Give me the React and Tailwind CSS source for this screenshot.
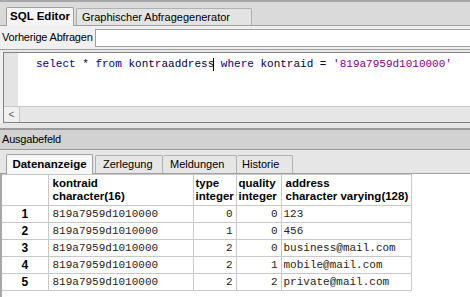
import React from "react";

const rows = [
  ["1", "819a7959d1010000", "0", "0", "123"],
  ["2", "819a7959d1010000", "1", "0", "456"],
  ["3", "819a7959d1010000", "2", "0", "business@mail.com"],
  ["4", "819a7959d1010000", "2", "1", "mobile@mail.com"],
  ["5", "819a7959d1010000", "2", "2", "private@mail.com"],
];

const ui = { fontFamily: '"Liberation Sans", Arial, sans-serif' };
const mono = { fontFamily: '"Liberation Mono", "Courier New", monospace' };

export default function App() {
  return (
    <div className="w-[470px] h-[297px] overflow-hidden flex flex-col bg-[#f0f0f0] text-[11px] text-black" style={ui}>
      {/* top tab strip */}
      <div className="h-[26px] shrink-0 border-t-2 border-[#a6a6a6] bg-[#dadada] border-b border-b-[#a0a0a0] flex items-end pl-[6px]">
        <div className="h-[19px] w-[68px] bg-[#f5f5f5] border border-b-0 border-[#a0a0a0] rounded-t-[2px] flex items-center justify-center font-bold text-[11.5px] -mb-px">
          SQL Editor
        </div>
        <div className="ml-[2px] h-[17px] w-[176px] bg-[#e3e3e3] border border-b-0 border-[#b0b0b0] rounded-t-[2px] flex items-center pl-[5px] text-[11px]">
          Graphischer Abfragegenerator
        </div>
      </div>
      {/* previous queries */}
      <div className="h-[23px] shrink-0 flex items-center bg-[#f0f0f0]">
        <span className="pl-[2px] w-[95px] tracking-[-0.2px]">Vorherige Abfragen</span>
        <div className="flex-1 h-[18px] bg-white border border-[#a0a0a0] border-r-0"></div>
      </div>
      <div className="h-[3px] shrink-0 border-t border-[#a0a0a0] bg-[#e8e8e8]"></div>
      {/* editor */}
      <div className="h-[71px] shrink-0 ml-[3px] border border-[#828282] border-r-0 flex flex-col bg-white">
        <div className="flex-1 flex">
          <div className="w-[14px] bg-[#e4e4e4]"></div>
          <div className="flex-1 pl-[18px] pt-[4px] text-[11px] whitespace-nowrap leading-[14px]" style={mono}>
            <span className="text-[#00007f]">select</span>
            <span className="text-[#000040]"> * </span>
            <span className="text-[#00007f]">from</span>
            <span className="text-[#000040]"> kontraaddress</span>
            <span className="inline-block w-px h-[13px] bg-black align-middle -ml-px"></span>
            <span className="text-[#00007f]"> where</span>
            <span className="text-[#000040]"> kontraid = </span>
            <span className="text-[#7f007f]">'819a7959d1010000'</span>
          </div>
        </div>
        <div className="h-[16px] flex bg-[#e6e6e6] border-t border-[#c8c8c8]">
          <div className="w-[16px] flex items-center justify-center text-[#606060] text-[10px] border-r border-[#c8c8c8] bg-[#f0f0f0]">&lt;</div>
          <div className="flex-1"></div>
        </div>
      </div>
      {/* splitter */}
      <div className="h-[7px] shrink-0 bg-[#e6e6e6] border-b-2 border-[#9a9a9a]"></div>
      {/* Ausgabefeld */}
      <div className="h-[20px] shrink-0 bg-[#d2d2d2] flex items-center pl-[2px] border-b border-[#9a9a9a] tracking-[-0.2px]">
        Ausgabefeld
      </div>
      {/* output tabs */}
      <div className="h-[24px] shrink-0 bg-[#e6e6e6] border-b border-[#a0a0a0] flex items-end pl-[6px]">
        <div className="h-[20px] w-[87px] bg-[#f7f7f7] border border-b-0 border-[#a0a0a0] rounded-t-[2px] flex items-center justify-center font-bold text-[11.5px] -mb-px">
          Datenanzeige
        </div>
        <div className="ml-[2px] h-[18px] w-[68px] bg-[#e6e6e6] border border-b-0 border-[#b0b0b0] rounded-t-[2px] flex items-center pl-[7px]">
          Zerlegung
        </div>
        <div className="h-[18px] w-[74px] bg-[#e6e6e6] border border-b-0 border-l-0 border-[#b0b0b0] rounded-t-[2px] flex items-center pl-[7px]">
          Meldungen
        </div>
        <div className="h-[18px] w-[56px] bg-[#e6e6e6] border border-b-0 border-l-0 border-[#b0b0b0] rounded-t-[2px] flex items-center pl-[5px]">
          Historie
        </div>
      </div>
      {/* grid */}
      <div className="flex-1 bg-white border-l-2 border-[#a8a8a8] pl-0">
        <table className="border-collapse table-fixed" style={{ width: 409 }}>
          <colgroup>
            <col style={{ width: 46 }} />
            <col style={{ width: 145 }} />
            <col style={{ width: 43 }} />
            <col style={{ width: 45 }} />
            <col style={{ width: 130 }} />
          </colgroup>
          <thead>
            <tr className="h-[31px] text-[11.5px]">
              <th className="border border-[#c8c8c8] border-l-0"></th>
              <th className="border border-[#c8c8c8] text-left align-middle pl-[4px] font-bold leading-[13px]">kontraid<br />character(16)</th>
              <th className="border border-[#c8c8c8] text-left align-middle pl-[2px] font-bold leading-[13px]">type<br />integer</th>
              <th className="border border-[#c8c8c8] text-left align-middle pl-[2px] font-bold leading-[13px]">quality<br />integer</th>
              <th className="border border-[#c8c8c8] text-left align-middle pl-[4px] font-bold leading-[13px] whitespace-nowrap">address<br />character varying(128)</th>
            </tr>
          </thead>
          <tbody>
            {rows.map((r) => (
              <tr key={r[0]} className="h-[17px] leading-[15px]">
                <td className="border border-[#c8c8c8] border-l-0 text-center font-bold p-0 text-[12px]">{r[0]}</td>
                <td className="border border-[#c8c8c8] pl-[4px] p-0 text-[#2a1a1a] whitespace-nowrap" style={mono}>{r[1]}</td>
                <td className="border border-[#c8c8c8] text-right pr-[3px] p-0 text-[#2a1a1a]" style={mono}>{r[2]}</td>
                <td className="border border-[#c8c8c8] text-right pr-[3px] p-0 text-[#2a1a1a]" style={mono}>{r[3]}</td>
                <td className="border border-[#c8c8c8] pl-[2px] p-0 text-[#2a1a1a] whitespace-nowrap" style={mono}>{r[4]}</td>
              </tr>
            ))}
          </tbody>
        </table>
      </div>
    </div>
  );
}
